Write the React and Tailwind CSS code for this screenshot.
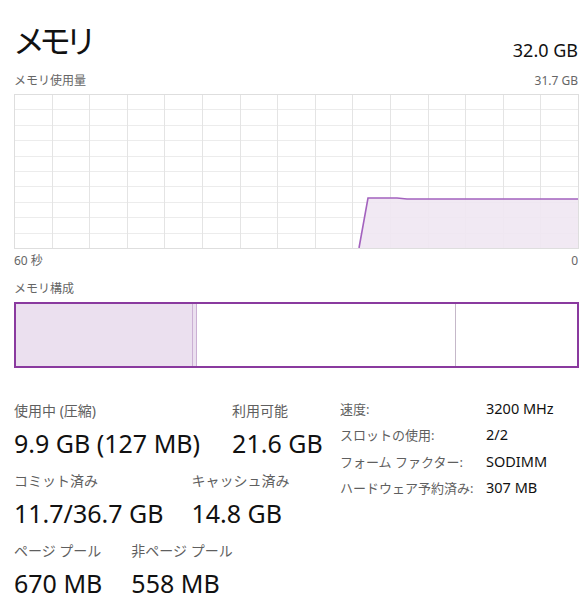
import React from "react";

const FONT = { fontFamily: '"Noto Sans", "Noto Sans CJK JP", sans-serif' };

function Chart() {
  const W = 564;
  const H = 154;
  const cols = 15;
  const rows = 10;
  const vLines = [];
  for (let i = 1; i < cols; i++) {
    const x = Math.round((W * i) / cols) + 0.5;
    vLines.push(<line key={"v" + i} x1={x} y1={0} x2={x} y2={H} stroke="#e4e4e4" strokeWidth="1" />);
  }
  const hLines = [];
  for (let j = 1; j < rows; j++) {
    const y = Math.round((H * j) / rows) + 0.5;
    hLines.push(<line key={"h" + j} x1={0} y1={y} x2={W} y2={y} stroke="#ececec" strokeWidth="1" />);
  }
  return (
    <svg width={W + 1} height={H + 1} viewBox={`0 0 ${W + 1} ${H + 1}`} className="block">
      {hLines}
      {vLines}
      <polygon points={`345,${H} 354,104 383,104 393,105 ${W},105 ${W},${H}`} fill="#efe7f2" fillOpacity="0.9" />
      <polyline points={`345,${H} 354,104 383,104 393,105 ${W},105`} fill="none" stroke="#a362be" strokeWidth="1.6" />
      <rect x="0.5" y="0.5" width={W} height={H} fill="none" stroke="#dedede" strokeWidth="1" />
    </svg>
  );
}

function Stat({ label, value }) {
  return (
    <div className="flex flex-col">
      <div className="text-[14px] leading-[18px] text-[#5f5f5f] whitespace-nowrap">{label}</div>
      <div className="text-[25px] leading-[32px] text-[#111] mt-[7px] whitespace-nowrap">{value}</div>
    </div>
  );
}

function Row({ label, value }) {
  return (
    <div className="flex items-baseline h-[26.3px]">
      <span className="w-[146px] text-[13px] text-[#5f5f5f]">{label}</span>
      <span className="text-[14.5px] text-[#111]">{value}</span>
    </div>
  );
}

export default function App() {
  return (
    <div className="w-[588px] h-[600px] bg-white overflow-hidden pl-[14px] pr-[10px]" style={FONT}>
      <div className="flex items-end justify-between pt-[19px]">
        <div className="text-[32px] leading-[44px] text-[#111] -ml-[1px] tracking-[-6px]">メモリ</div>
        <div className="text-[18px] leading-[28px] text-[#111] -mb-[1px]">32.0 GB</div>
      </div>
      <div className="flex justify-between mt-[10px] text-[12px] leading-[16px] text-[#666]">
        <span>メモリ使用量</span>
        <span>31.7 GB</span>
      </div>
      <div className="mt-[5px]">
        <Chart />
      </div>
      <div className="flex justify-between mt-[4px] text-[12px] leading-[16px] text-[#666]">
        <span>60 秒</span>
        <span>0</span>
      </div>
      <div className="mt-[12px] text-[12px] leading-[16px] text-[#666]">メモリ構成</div>
      <div className="mt-[5px] h-[66px] w-[565px] border-2 border-[#8a3a9f] flex">
        <div className="w-[176px] bg-[#ebe0ef]"></div>
        <div className="w-[5px] bg-[#ebe0ef] border-l border-r border-[#cbb0d4]"></div>
        <div className="w-[259px] border-r border-[#c5b8c9]"></div>
        <div className="flex-1"></div>
      </div>
      <div className="flex mt-[34px]">
        <div className="flex flex-col gap-[13px] w-[326px]">
          <div className="flex gap-[32px]">
            <Stat label="使用中 (圧縮)" value="9.9 GB (127 MB)" />
            <Stat label="利用可能" value="21.6 GB" />
          </div>
          <div className="flex gap-[28px]">
            <Stat label="コミット済み" value="11.7/36.7 GB" />
            <Stat label="キャッシュ済み" value="14.8 GB" />
          </div>
          <div className="flex gap-[29px]">
            <Stat label="ページ プール" value="670 MB" />
            <Stat label="非ページ プール" value="558 MB" />
          </div>
        </div>
        <div className="flex flex-col -mt-[4px]">
          <Row label="速度:" value="3200 MHz" />
          <Row label="スロットの使用:" value="2/2" />
          <Row label="フォーム ファクター:" value="SODIMM" />
          <Row label="ハードウェア予約済み:" value="307 MB" />
        </div>
      </div>
    </div>
  );
}
